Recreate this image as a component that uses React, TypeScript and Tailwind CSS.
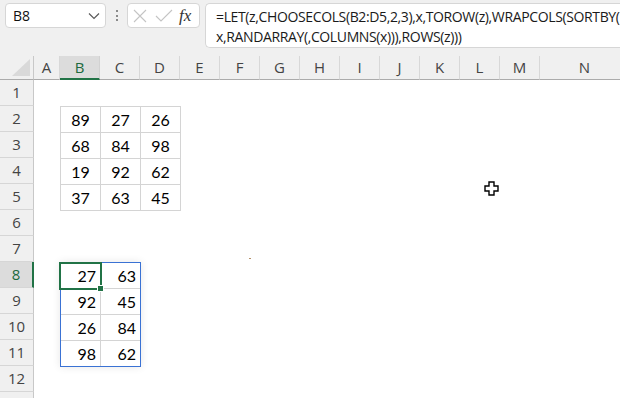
import React from 'react';

const top = [
  [89, 27, 26],
  [68, 84, 98],
  [19, 92, 62],
  [37, 63, 45],
];

const spill = [
  [27, 63],
  [92, 45],
  [26, 84],
  [98, 62],
];

const cols = ['A', 'B', 'C', 'D', 'E', 'F', 'G', 'H', 'I', 'J', 'K', 'L', 'M', 'N'];

function colWidth(c: string) {
  if (c === 'A') return 'w-[26px]';
  if (c === 'N') return 'w-[90px]';
  return 'w-[40px]';
}

const ui = { fontFamily: '"Open Sans", "Noto Sans", sans-serif' };
const cellFont = { fontFamily: 'Lato, "Liberation Sans", sans-serif' };

function Toolbar() {
  return (
    <div className="flex h-[56px] items-start pt-[3px] pl-[5px] bg-[#f0f0f0]" style={ui}>
      <div className="flex shrink-0 w-[101px] h-[25px] items-center justify-between rounded-[4px] border border-[#d6d6d6] bg-white pl-[7px] pr-[5px]">
        <span className="text-[14px] text-[#111]">B8</span>
        <svg width="12" height="8" viewBox="0 0 12 8" className="mt-[1px]">
          <path d="M1 1.5 L6 6.5 L11 1.5" fill="none" stroke="#5a5a5a" strokeWidth="1.2" />
        </svg>
      </div>
      <div className="flex shrink-0 w-[21px] h-[25px] flex-col items-center justify-center gap-[2.5px]">
        <span className="w-[2px] h-[2px] bg-[#8a8a8a]" />
        <span className="w-[2px] h-[2px] bg-[#8a8a8a]" />
        <span className="w-[2px] h-[2px] bg-[#8a8a8a]" />
      </div>
      <div className="flex shrink-0 w-[73px] h-[25px] items-center rounded-[4px] border border-[#d6d6d6] bg-white pl-[5px]">
        <svg width="14" height="14" viewBox="0 0 14 14">
          <path d="M1 1 L13 13 M13 1 L1 13" stroke="#c4c4c4" strokeWidth="1.1" />
        </svg>
        <svg width="18" height="14" viewBox="0 0 18 14" className="ml-[8px]">
          <path d="M1 7 L6 12 L17 1" fill="none" stroke="#c4c4c4" strokeWidth="1.1" />
        </svg>
        <span
          className="ml-[6px] text-[17px] italic leading-none text-[#333]"
          style={{ fontFamily: '"Liberation Serif", "DejaVu Serif", serif' }}
        >
          fx
        </span>
      </div>
      <div className="ml-[5px] min-w-0 flex-1 h-[45px] overflow-hidden rounded-l-[5px] border border-r-0 border-[#d6d6d6] bg-white pl-[10px] pt-[3px] text-[14px] leading-[20px] tracking-[-0.37px] text-[#1a1a1a]">
        <div className="whitespace-nowrap">=LET(z,CHOOSECOLS(B2:D5,2,3),x,TOROW(z),WRAPCOLS(SORTBY(</div>
        <div className="whitespace-nowrap">x,RANDARRAY(,COLUMNS(x))),ROWS(z)))</div>
      </div>
    </div>
  );
}

function ColumnHeaders() {
  return (
    <div className="flex h-[24px] bg-[#f0f0f0] text-[15px]" style={ui}>
      <div className="w-[34px] shrink-0 border-r border-b border-[#c8c8c8] border-b-[#ababab] flex items-end justify-end pr-[3px] pb-[3px]">
        <svg width="18" height="17" viewBox="0 0 18 17">
          <path d="M18 0 L18 17 L0 17 Z" fill="#d9d9d9" />
        </svg>
      </div>
      {cols.map((c) =>
        c === 'B' ? (
          <div
            key={c}
            className={`${colWidth(c)} shrink-0 flex items-center justify-center border-r border-[#d2d2d2] border-b-2 border-b-[#217346] bg-[#dcdcdc] text-[#1d6a3e]`}
          >
            {c}
          </div>
        ) : (
          <div
            key={c}
            className={`${colWidth(c)} shrink-0 flex items-center justify-center border-r border-[#d8d8d8] border-b border-b-[#ababab] text-[#444]`}
          >
            {c}
          </div>
        ),
      )}
    </div>
  );
}

function RowHeaders() {
  const rows = Array.from({ length: 12 }, (_, i) => i + 1);
  return (
    <div className="w-[34px] shrink-0 flex flex-col bg-[#f0f0f0] text-[15px]" style={ui}>
      {rows.map((r) =>
        r === 8 ? (
          <div
            key={r}
            className="h-[26px] shrink-0 flex items-center justify-center border-b border-[#d6d6d6] border-r-2 border-r-[#217346] bg-[#dcdcdc] text-[#1d6a3e]"
          >
            {r}
          </div>
        ) : (
          <div
            key={r}
            className="h-[26px] shrink-0 flex items-center justify-center border-b border-[#d6d6d6] border-r border-r-[#c8c8c8] text-[#444]"
          >
            {r}
          </div>
        ),
      )}
      <div className="flex-1 border-r border-r-[#c8c8c8]" />
    </div>
  );
}

function Sheet() {
  return (
    <div className="relative flex-1 bg-white overflow-hidden text-[16px] text-black" style={cellFont}>
      <div className="h-[26px]" />
      <div className="ml-[26px] w-fit grid grid-cols-[40px_40px_40px] border-t border-l border-[#d4d4d4]">
        {top.flat().map((v, i) => (
          <div key={i} className="h-[26px] flex items-center justify-center border-r border-b border-[#d4d4d4]">
            {v}
          </div>
        ))}
      </div>
      <div className="h-[51px]" />
      <div className="relative ml-[26px] w-fit grid grid-cols-[40px_39px] border border-[#3a72d4] shadow-[0_0_8px_rgba(0,0,0,0.10)]">
        {spill.map((row, ri) =>
          row.map((v, ci) => (
            <div
              key={`${ri}-${ci}`}
              className={`${ri < 3 ? 'h-[26px] border-b' : 'h-[25px]'} ${ci === 0 ? 'border-r' : ''} border-[#d4d4d4] flex items-center justify-end pr-[4px]`}
            >
              {v}
            </div>
          )),
        )}
        <div className="absolute -left-[2px] -top-[1px] w-[43px] h-[28px] border-2 border-[#217346]" />
        <div className="absolute left-[36px] top-[22px] w-[7px] h-[7px] bg-[#217346] border border-white" />
      </div>
      <div className="absolute left-[215px] top-[178px] w-[2px] h-[1px] bg-[#b49068]" />
      <svg className="absolute left-[450px] top-[101px]" width="15" height="15" viewBox="0 0 15 15">
        <path
          d="M5 1 H10 V5 H14 V10 H10 V14 H5 V10 H1 V5 H5 Z"
          fill="#fff"
          stroke="#000"
          strokeWidth="1.4"
          strokeLinejoin="miter"
        />
      </svg>
    </div>
  );
}

export default function App() {
  return (
    <div className="w-[620px] h-[398px] overflow-hidden bg-[#f0f0f0]">
      <Toolbar />
      <ColumnHeaders />
      <div className="flex h-[318px]">
        <RowHeaders />
        <Sheet />
      </div>
    </div>
  );
}
